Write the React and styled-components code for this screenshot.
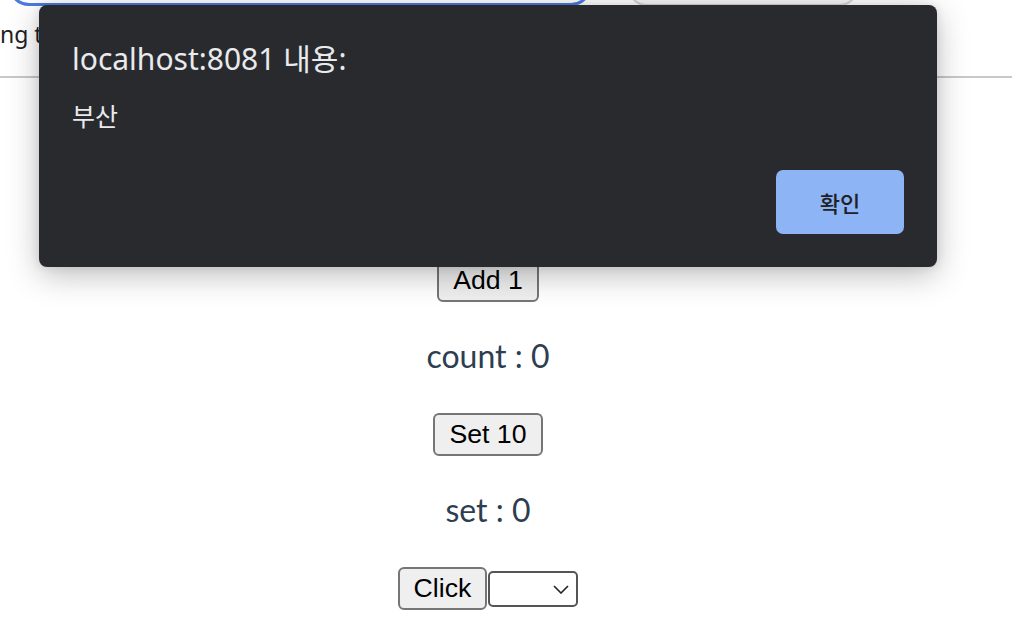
import styled, { createGlobalStyle } from "styled-components";

const GlobalStyle = createGlobalStyle`
    html, body {
        margin: 0;
        padding: 0;
        background: #ffffff;
        overflow: hidden;
    }
`;

const Page = styled.div`
    position: relative;
    width: 1012px;
    height: 634px;
    overflow: hidden;
    font-family: "Noto Sans", "Noto Sans CJK KR", sans-serif;
`;

const Header = styled.header`
    height: 76px;
    border-bottom: 2px solid #c8c8c8;
    overflow: hidden;
    display: flex;
    flex-direction: column;
`;

const TopRow = styled.div`
    display: flex;
    align-items: flex-end;
    gap: 35px;
    margin-top: -36px;
    padding-left: 8px;
`;

const UrlInput = styled.div`
    width: 578px;
    height: 36px;
    border: 3px solid #4a7be0;
    border-radius: 22px;
    background: #fff;
`;

const SearchBox = styled.div`
    width: 228px;
    height: 37px;
    border: 2px solid #d4d4d4;
    border-radius: 20px;
    background: #f7f7f7;
`;

const LeadText = styled.div`
    margin-top: 13px;
    margin-left: 0;
    font-size: 23px;
    line-height: 30px;
    color: #202124;
    white-space: nowrap;
`;

const Main = styled.main`
    width: 976px;
    padding-top: 181px;
    display: flex;
    flex-direction: column;
    align-items: center;
    color: #2c3e50;
`;

const Button = styled.button`
    font-family: "Liberation Sans", Arial, sans-serif;
    font-size: 26.67px;
    line-height: 31px;
    padding: 4px 14px;
    color: #000;
    background: #efefef;
    border: 2px solid #767676;
    border-radius: 6px;
`;

const Counter = styled.p`
    margin: 32px 0;
    padding-bottom: 4px;
    font-family: Lato, "Noto Sans", sans-serif;
    font-size: 32px;
    line-height: 43px;
    color: #2c3e50;
`;

const Row = styled.div`
    display: flex;
    align-items: center;
    gap: 1px;
`;

const SelectWrap = styled.div`
    position: relative;
    width: 90px;
    height: 36px;
`;

const Select = styled.select`
    appearance: none;
    width: 100%;
    height: 100%;
    background: #fff;
    border: 2px solid #555;
    border-radius: 5px;
`;

const Chevron = styled.svg`
    position: absolute;
    right: 9px;
    top: 14px;
    pointer-events: none;
`;

const Dialog = styled.div`
    position: absolute;
    left: 39px;
    top: 5px;
    width: 898px;
    height: 262px;
    box-sizing: border-box;
    padding: 36px 33px 33px;
    background: #292a2e;
    border-radius: 8px;
    box-shadow: 0 8px 32px rgba(0, 0, 0, 0.26), 0 0 10px rgba(0, 0, 0, 0.1);
    display: flex;
    flex-direction: column;
    color: #e8eaed;
`;

const DialogTitle = styled.div`
    font-size: 30px;
    line-height: 36px;
`;

const DialogBody = styled.div`
    margin-top: 23px;
    font-size: 25px;
    line-height: 32px;
`;

const DialogFooter = styled.div`
    margin-top: auto;
    display: flex;
    justify-content: flex-end;
`;

const ConfirmButton = styled.button`
    width: 128px;
    height: 64px;
    border: none;
    border-radius: 7px;
    background: #8db4f4;
    color: #202124;
    font-family: "Noto Sans CJK KR", sans-serif;
    font-size: 22px;
    font-weight: 500;
`;

export default function App() {
    return (
        <Page>
            <GlobalStyle />
            <Header>
                <TopRow>
                    <UrlInput />
                    <SearchBox />
                </TopRow>
                <LeadText>ng the</LeadText>
            </Header>
            <Main>
                <Button>Add 1</Button>
                <Counter>count : 0</Counter>
                <Button>Set 10</Button>
                <Counter>set : 0</Counter>
                <Row>
                    <Button>Click</Button>
                    <SelectWrap>
                        <Select>
                            <option></option>
                        </Select>
                        <Chevron width="16" height="9" viewBox="0 0 16 9">
                            <path d="M1 1 L8 8 L15 1" fill="none" stroke="#222" strokeWidth="1.6" />
                        </Chevron>
                    </SelectWrap>
                </Row>
            </Main>
            <Dialog>
                <DialogTitle>localhost:8081 내용:</DialogTitle>
                <DialogBody>부산</DialogBody>
                <DialogFooter>
                    <ConfirmButton>확인</ConfirmButton>
                </DialogFooter>
            </Dialog>
        </Page>
    );
}
